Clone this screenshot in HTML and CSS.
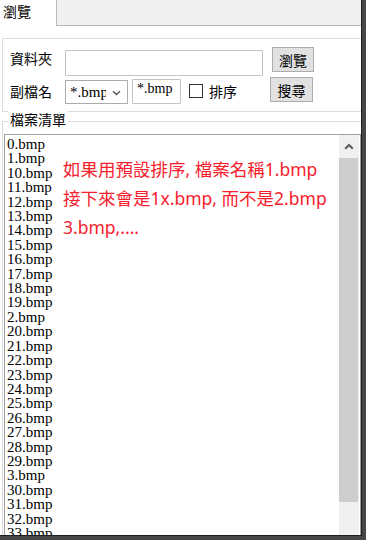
FILE: index.html
```html
<!DOCTYPE html>
<html lang="zh-Hant">
<head>
<meta charset="utf-8">
<title>瀏覽</title>
<link rel="stylesheet" href="styles.css">
</head>
<body>
<div class="frame">
  <div class="tabs"><div class="tab">瀏覽</div></div>
  <div class="group g1">
    <div class="row r1">
      <span class="lbl">資料夾</span>
      <div class="tb tb-path"></div>
      <button class="btn b-browse">瀏覽</button>
    </div>
    <div class="row r2">
      <span class="lbl">副檔名</span>
      <div class="combo">
        <span class="combo-text">*.bmp</span>
        <svg class="chev" width="9" height="6" viewBox="0 0 9 6"><polyline points="1,1.2 4.5,4.6 8,1.2" fill="none" stroke="#555" stroke-width="1.4"/></svg>
      </div>
      <div class="tb tb-ext">*.bmp</div>
      <span class="chk"></span>
      <span class="chk-lbl">排序</span>
      <button class="btn b-search">搜尋</button>
    </div>
  </div>
  <div class="group g2">
    <span class="legend">檔案清單</span>
    <div class="listbox">
      <ul class="items">
        <li>0.bmp</li><li>1.bmp</li><li>10.bmp</li><li>11.bmp</li><li>12.bmp</li><li>13.bmp</li><li>14.bmp</li><li>15.bmp</li><li>16.bmp</li><li>17.bmp</li><li>18.bmp</li><li>19.bmp</li><li>2.bmp</li><li>20.bmp</li><li>21.bmp</li><li>22.bmp</li><li>23.bmp</li><li>24.bmp</li><li>25.bmp</li><li>26.bmp</li><li>27.bmp</li><li>28.bmp</li><li>29.bmp</li><li>3.bmp</li><li>30.bmp</li><li>31.bmp</li><li>32.bmp</li><li>33.bmp</li><li>34.bmp</li><li>35.bmp</li>
      </ul>
      <div class="scroll">
        <div class="arrow"><svg width="10" height="7" viewBox="0 0 10 7"><polyline points="1.2,5.8 5,2 8.8,5.8" fill="none" stroke="#5a5a5a" stroke-width="2"/></svg></div>
        <div class="thumb"></div>
      </div>
    </div>
  </div>
  <div class="note">如果用預設排序, 檔案名稱1.bmp<br>接下來會是1x.bmp, 而不是2.bmp<br>3.bmp,....</div>
</div>
</body>
</html>
```
FILE: styles.css
```css
* { box-sizing: border-box; margin: 0; padding: 0; }
html, body { background: #474747; }
body { width: 366px; height: 540px; overflow: hidden; }

.frame {
  width: 361px;
  height: 535px;
  background: #fff;
  overflow: hidden;
  position: relative;
  display: flex;
  flex-direction: column;
  font-family: "Noto Sans CJK TC", "Noto Sans", sans-serif;
  font-size: 14px;
  color: #000;
  box-shadow: 1px 0 0 #1e1e1e, 0 1px 0 #1e1e1e, 1px 1px 0 #1e1e1e;
}

.tabs {
  height: 26px;
  flex-shrink: 0;
  background: #f0f0f0;
  border-bottom: 1px solid #b9b9b9;
  display: flex;
}
.tab {
  width: 57px;
  height: 26px;
  background: #fff;
  border-right: 1px solid #b9b9b9;
  padding-left: 3px;
  line-height: 22px;
}

.group { border: 1px solid #dcdcdc; flex-shrink: 0; }
.g1 {
  margin: 12px 0 0 2px;
  height: 74px;
  border-right: none;
  padding: 8px 0 0 7px;
}
.row { display: flex; align-items: flex-start; }
.r1 { height: 30px; }
.lbl { width: 55px; line-height: 20px; }
.r1 .lbl { margin-top: 1px; }
.r2 .lbl { margin-top: 4px; }

.tb {
  border: 1px solid #c3c3c3;
  border-radius: 1px;
  background: #fff;
  font-family: "Liberation Serif", serif;
  font-size: 14px;
}
.tb-path { margin-top: 3px; width: 198px; height: 26px; }
.tb-ext {
  margin: 2px 0 0 4px;
  width: 49px;
  height: 25px;
  padding-left: 4px;
  line-height: 18px;
}

.btn {
  background: #e1e1e1;
  border: 1px solid #adadad;
  font: inherit;
  font-size: 14px;
  line-height: 20px;
  color: #000;
}
.b-browse { margin-left: 9px; width: 42px; height: 25px; }
.b-search { margin-left: 33px; width: 43px; height: 25px; }

.combo {
  margin-top: 3px;
  width: 63px;
  height: 24px;
  border: 1px solid #acacac;
  background: #fff;
  display: flex;
  align-items: center;
  padding-left: 4px;
}
.combo-text {
  width: 36px;
  overflow: hidden;
  white-space: nowrap;
  font-family: "Liberation Serif", serif;
  font-size: 15px;
  line-height: 22px;
}
.chev { margin-left: 6px; margin-top: 2px; }

.chk {
  margin: 7px 0 0 8px;
  width: 14px;
  height: 14px;
  border: 1px solid #333;
  background: #fff;
}
.chk-lbl { margin: 4px 0 0 6px; line-height: 20px; }

.g2 {
  margin: 9px 0 0 2px;
  flex: 1;
  border-right: none;
  border-bottom: none;
  position: relative;
  padding: 12px 0 0 1px;
  display: flex;
  flex-direction: column;
}
.legend {
  position: absolute;
  left: 5px;
  top: -11px;
  padding: 0 2px;
  background: #fff;
  line-height: 16px;
}

.listbox {
  flex: 1;
  border: 1px solid #a0a0a0;
  border-bottom: none;
  display: flex;
  overflow: hidden;
}
.items {
  flex: 1;
  list-style: none;
  padding: 2px 0 0 2px;
  font-family: "Liberation Serif", serif;
  font-size: 15px;
  line-height: 14.4px;
}
.scroll {
  width: 20px;
  margin-right: 1px;
  background: #f0f0f0;
  display: flex;
  flex-direction: column;
}
.arrow {
  height: 23px;
  display: flex;
  align-items: center;
  justify-content: center;
}
.thumb {
  height: 344px;
  margin-right: 1px;
  background: #cdcdcd;
}

.note {
  position: absolute;
  left: 63px;
  top: 155px;
  color: #f7202c;
  font-family: "Noto Sans", "Noto Sans CJK TC", sans-serif;
  font-size: 17.5px;
  line-height: 29px;
  white-space: nowrap;
}
```
